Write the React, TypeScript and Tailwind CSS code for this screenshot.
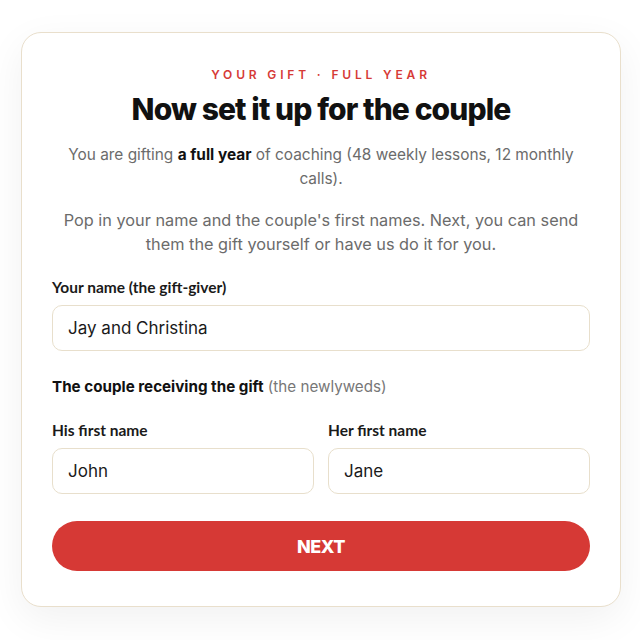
import { useState } from "react";

function Field({ label, value, onChange }: { label: string; value: string; onChange: (v: string) => void }) {
  return (
    <label className="flex flex-col">
      <span className="text-[15.5px] leading-5 font-bold text-[#1a1a1a] font-['Lato',sans-serif]">{label}</span>
      <input
        value={value}
        onChange={(e) => onChange(e.target.value)}
        className="mt-2 h-[46px] w-full rounded-[10px] border border-[#e8dfcc] bg-white px-[15px] text-[17px] text-[#1a1a1a] outline-none font-['Inter',sans-serif]"
      />
    </label>
  );
}

export default function App() {
  const [giver, setGiver] = useState("Jay and Christina");
  const [his, setHis] = useState("John");
  const [her, setHer] = useState("Jane");

  return (
    <div className="min-h-screen bg-white pt-[32px] font-['Inter',sans-serif]">
      <div className="ml-[21px] w-[600px] rounded-[20px] border border-[#e9dfcc] bg-white px-[30px] pt-[34px] pb-[35px] shadow-[0_12px_40px_rgba(0,0,0,0.06)]">
        {/* HEADER */}
        <p className="text-center text-[12px] leading-4 font-semibold tracking-[0.32em] text-[#d63a36]">
          YOUR GIFT · FULL YEAR
        </p>
        <h1 className="mt-[9px] text-center text-[30px] leading-[34px] font-extrabold tracking-[-0.03em] text-[#111]">
          Now set it up for the couple
        </h1>
        <p className="mt-[17px] px-2 text-center text-[15.4px] leading-6 text-[#6b6b6b]">
          You are gifting <b className="font-bold text-[#111]">a full year</b> of coaching (48 weekly lessons, 12 monthly calls).
        </p>
        <p className="mt-[17px] px-2 text-center text-[16.3px] leading-6 text-[#6b6b6b]">
          Pop in your name and the couple's first names. Next, you can send them the gift yourself or have us do it for you.
        </p>

        {/* FORM */}
        <div className="mt-[21px]">
          <Field label="Your name (the gift-giver)" value={giver} onChange={setGiver} />
        </div>

        <p className="mt-[25px] text-[15.2px] leading-[22px] text-[#777]">
          <b className="font-bold text-[#111]">The couple receiving the gift</b> (the newlyweds)
        </p>

        <div className="mt-[22px] grid grid-cols-2 gap-[14px]">
          <Field label="His first name" value={his} onChange={setHis} />
          <Field label="Her first name" value={her} onChange={setHer} />
        </div>

        <button className="mt-[27px] h-[50px] w-full rounded-full bg-[#d63935] text-[18px] font-extrabold tracking-tight text-white">
          NEXT
        </button>
      </div>
    </div>
  );
}
